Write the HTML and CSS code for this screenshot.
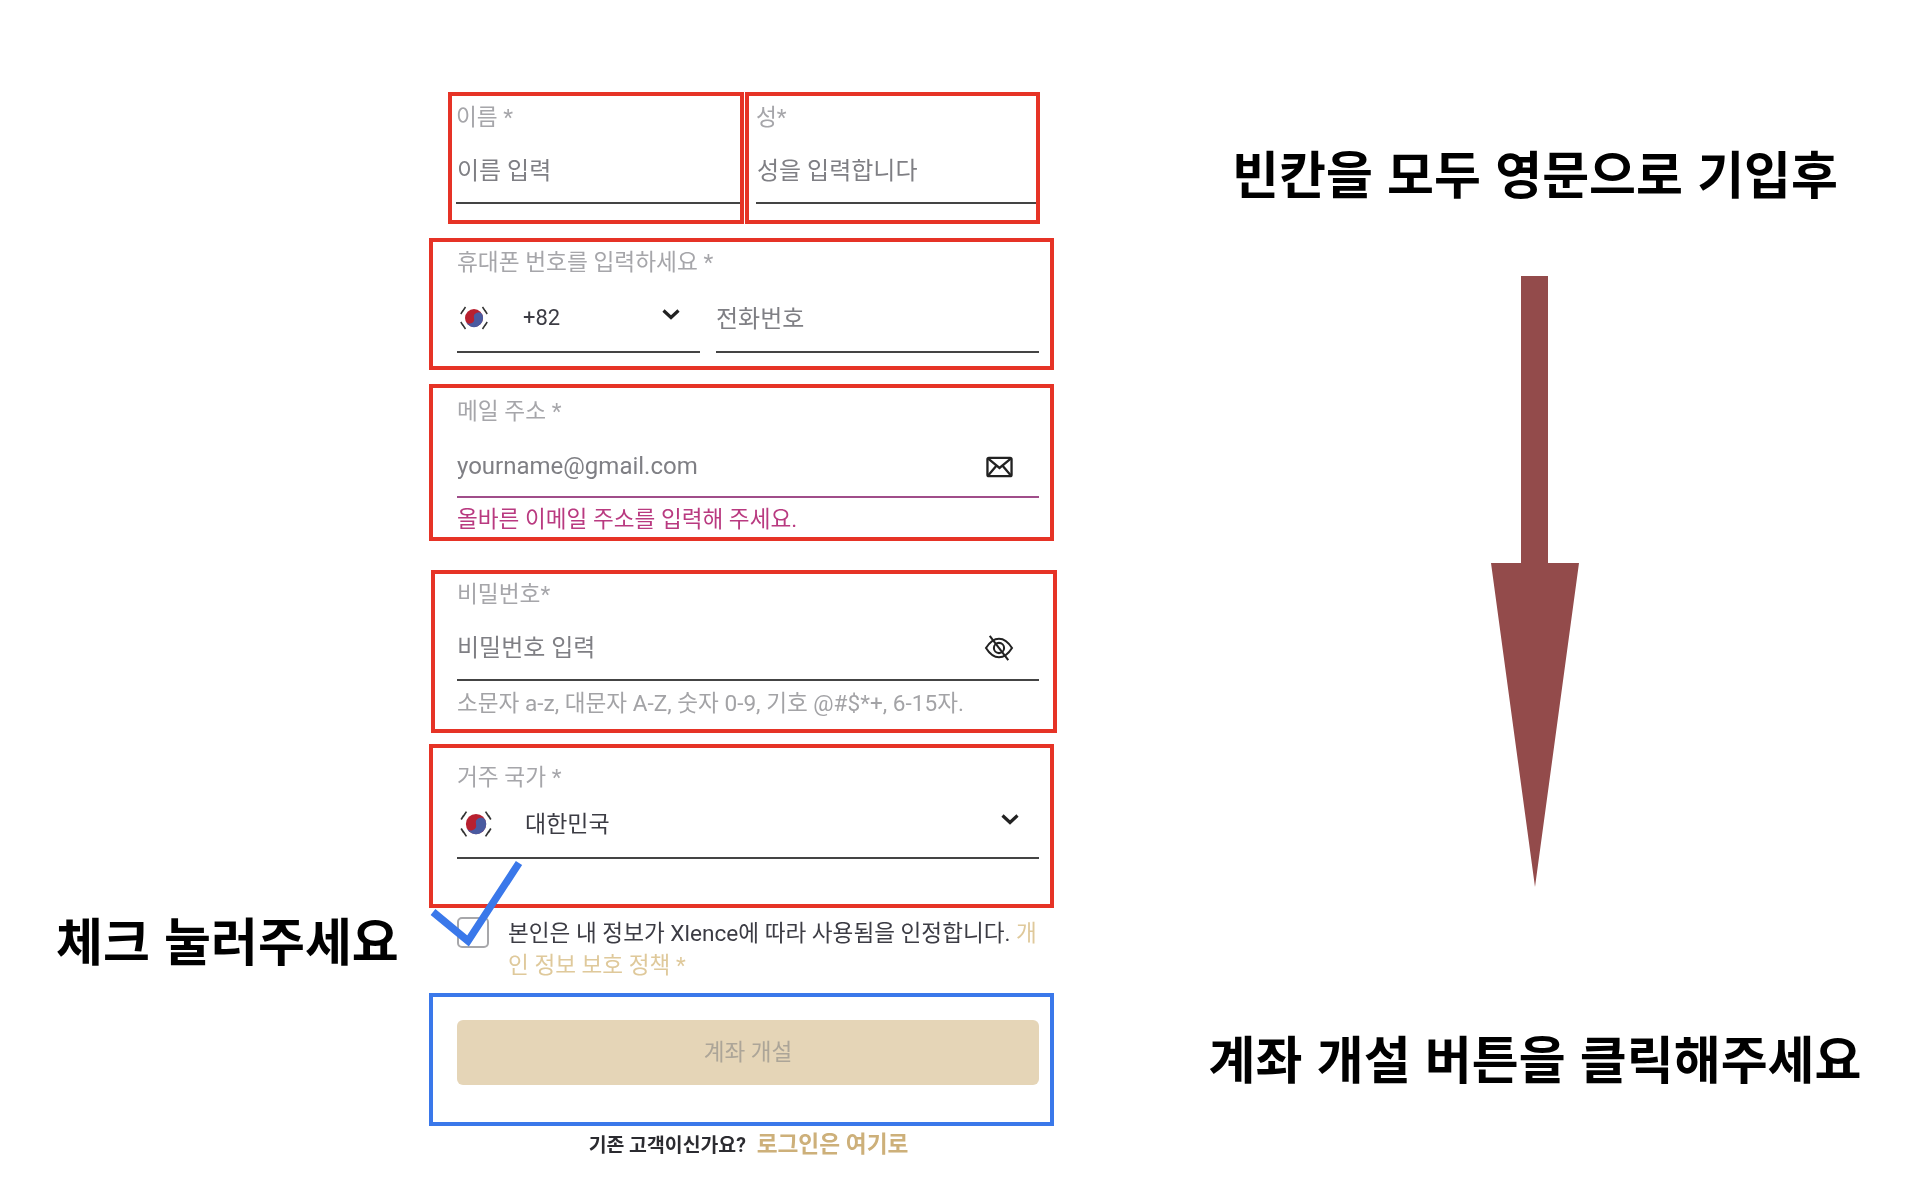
FILE: index.html
```html
<!DOCTYPE html>
<html lang="ko">
<head>
<meta charset="utf-8">
<title>계좌 개설</title>
<link rel="stylesheet" href="styles.css">
</head>
<body>
<main class="page">
  <aside class="left-note"><p class="note">체크 눌러주세요</p></aside>

  <form class="form">
    <div class="name-row">
      <section class="box box-name">
        <div class="label">이름 *</div>
        <div class="line"><span class="ph">이름 입력</span></div>
      </section>
      <section class="box box-name">
        <div class="label">성*</div>
        <div class="line"><span class="ph">성을 입력합니다</span></div>
      </section>
    </div>

    <section class="box box-phone">
      <div class="label">휴대폰 번호를 입력하세요 *</div>
      <div class="phone-row">
        <div class="line code">
          <svg class="flag" viewBox="0 0 32 32"><use href="#kr"/></svg>
          <span class="val code-val">+82</span>
          <svg class="chev" viewBox="0 0 20 12"><path d="M2.5 2.5 10 9.5 17.5 2.5"/></svg>
        </div>
        <div class="line num"><span class="ph">전화번호</span></div>
      </div>
    </section>

    <section class="box box-mail">
      <div class="label">메일 주소 *</div>
      <div class="line line-err">
        <span class="ph">yourname@gmail.com</span>
        <svg class="ico mail" viewBox="0 0 28 22"><rect x="1.5" y="1.5" width="25" height="19" rx="1.5"/><path d="M2 2 14 12 26 2M2 20 11 9.5M26 20 17 9.5"/></svg>
      </div>
      <div class="err">올바른 이메일 주소를 입력해 주세요.</div>
    </section>

    <section class="box box-pass">
      <div class="label">비밀번호*</div>
      <div class="line">
        <span class="ph">비밀번호 입력</span>
        <svg class="ico eye" viewBox="0 0 32 28"><path d="M2 14C7 6 12 4 16 4s9 2 14 10c-5 8-10 10-14 10S7 22 2 14Z"/><circle cx="16" cy="14" r="5.5"/><path d="M6 1 26 27"/></svg>
      </div>
      <div class="hint">소문자 a-z, 대문자 A-Z, 숫자 0-9, 기호 @#$*+, 6-15자.</div>
    </section>

    <section class="box box-country">
      <div class="label">거주 국가 *</div>
      <div class="line country">
        <svg class="flag" viewBox="0 0 32 32"><use href="#kr"/></svg>
        <span class="val country-val">대한민국</span>
        <svg class="chev" viewBox="0 0 20 12"><path d="M2.5 2.5 10 9.5 17.5 2.5"/></svg>
      </div>
    </section>

    <div class="agree">
      <span class="checkbox"></span>
      <p class="agree-text">본인은 내 정보가 Xlence에 따라 사용됨을 인정합니다. <span class="gold">개인 정보 보호 정책 *</span></p>
    </div>

    <section class="box box-blue">
      <div class="submit">계좌 개설</div>
    </section>

    <p class="login"><b>기존 고객이신가요?</b> <span class="login-link">로그인은 여기로</span></p>

    <svg class="tick" viewBox="0 0 100 90"><path d="M5 52 40 81 91 3"/></svg>
  </form>

  <aside class="right">
    <p class="note">빈칸을 모두 영문으로 기입후</p>
    <svg class="arrow" viewBox="0 0 90 613"><path d="M31 2H58V289H89L45 613 1 289H31Z"/></svg>
    <p class="note note-btn">계좌 개설 버튼을 클릭해주세요</p>
  </aside>
</main>

<svg class="defs" aria-hidden="true">
  <symbol id="kr" viewBox="0 0 32 32">
    <circle cx="16" cy="16" r="9" fill="#b8202f"/>
    <path d="M7.6 19.5a4.6 4.6 0 0 0 8.4-3.5 4.6 4.6 0 0 1 8.4-3.5A9 9 0 0 1 7.6 19.5Z" fill="#4a5aa0"/>
    <path d="M4.5 9.5 7.5 5M2.8 12 5 8.5M27.5 9.5 24.5 5M29.2 12 27 8.5M4.5 22.5 7.5 27M2.8 20 5 23.5M27.5 22.5 24.5 27M29.2 20 27 23.5" fill="none" stroke="#333" stroke-width="1.5"/>
  </symbol>
</svg>
</body>
</html>
```
FILE: styles.css
```css
* { box-sizing: border-box; }
html, body { margin: 0; background: #fff; }
body {
  width: 1916px;
  height: 1190px;
  overflow: hidden;
  font-family: "Roboto", "Noto Sans CJK KR", sans-serif;
}
p { margin: 0; }
.defs { display: none; }

.page {
  display: grid;
  grid-template-columns: 429px 625px 1fr;
  height: 100%;
}

/* annotations */
.note {
  font-family: "Noto Sans CJK KR", sans-serif;
  font-weight: 700;
  font-size: 51px;
  line-height: 60px;
  color: #000;
  white-space: nowrap;
}
.left-note { padding: 909px 0 0 56px; }
.right {
  padding: 142px 31px 0 131px;
  display: flex;
  flex-direction: column;
  align-items: center;
}
.arrow { display: block; width: 90px; height: 613px; fill: #934b4b; margin-top: 72px; }
.note-btn { margin-top: 140px; }

/* form column */
.form {
  position: relative;
  padding-top: 92px;
  display: flex;
  flex-direction: column;
  color: #3c3c44;
}
.name-row { display: flex; gap: 1px; margin-left: 19px; margin-bottom: 14px; }
.box {
  border: 4px solid #e63326;
  padding: 0 11px 0 24px;
  display: flex;
  flex-direction: column;
}
.box-name { width: 296px; height: 132px; padding: 0 0 0 4px; }
.box-name + .box-name { width: 295px; padding-left: 7px; }
.box-phone { height: 132px; margin-bottom: 14px; }
.box-mail { height: 157px; margin-bottom: 29px; }
.box-pass { height: 163px; margin: 0 -3px 11px 2px; padding-left: 22px; padding-right: 14px; }
.box-country { height: 164px; margin-bottom: 8px; }
.box-blue { border-color: #3a78ea; height: 133px; padding-top: 23px; margin-top: 11px; }

.label {
  font-size: 22.7px;
  line-height: 30px;
  color: #a6a6aa;
  margin-top: 7px;
  filter: blur(.4px);
}
.line {
  display: flex;
  align-items: center;
  justify-content: space-between;
  height: 66px;
  border-bottom: 2px solid #444;
  margin-top: 5px;
}
.ph { font-size: 24px; line-height: 30px; color: #7f7f84; filter: blur(.4px); }
.val { font-size: 22px; line-height: 28px; color: #3c3c44; filter: blur(.3px); }

.box-name .ph { margin: 2px 0 0 1px; }

.box-phone .label { margin-top: 6px; }
.phone-row { display: flex; gap: 16px; margin-top: 7px; }
.phone-row .line { margin-top: 0; height: 68px; }
.phone-row .ph { margin-top: 2px; }
.code { width: 243px; justify-content: flex-start; }
.num { flex: 1; }
.flag { width: 32px; height: 32px; flex: none; margin-left: 1px; filter: blur(.4px); }
.code-val { margin-left: 33px; }
.chev {
  width: 20px; height: 12px; flex: none;
  fill: none; stroke: #222; stroke-width: 3.2;
  margin: 0 19px 8px auto;
}
.ico { fill: none; stroke: #222; stroke-width: 2.4; flex: none; filter: blur(.3px); }
.mail { width: 27px; height: 22px; margin: 0 26px 1px 0; }
.eye { stroke-width: 2.2; width: 32px; height: 26px; margin-right: 24px; }

.box-mail .label { margin-top: 9px; }
.box-mail .line { height: 60px; margin-top: 11px; }
.box-mail .ph { margin-bottom: 2px; }
.line-err { border-bottom-color: #a04e8a; }
.err { font-size: 22.6px; line-height: 30px; color: #b93a80; margin-top: 7px; filter: blur(.4px); }

.box-pass .label { margin-top: 6px; }
.box-pass .line { height: 64px; margin-top: 7px; }
.hint { font-size: 22.6px; line-height: 30px; color: #a3a3a6; margin-top: 8px; filter: blur(.4px); }

.box-country .label { line-height: 26px; margin-top: 17px; }
.box-country .line { height: 68px; margin-top: 0; }
.country .flag { width: 36px; height: 36px; }
.country-val { font-size: 23px; margin: 2px auto 0 31px; }
.country .chev { margin: 0 19px 10px 0; }

/* agreement */
.agree { display: flex; gap: 19px; padding-left: 28px; }
.checkbox {
  width: 32px; height: 31px; flex: none; margin-top: 1px;
  border: 2px solid #a7a7aa; border-radius: 5px;
}
.agree-text {
  width: 536px;
  padding-top: 2px;
  font-size: 22.6px;
  line-height: 32px;
  color: #3c3c44;
  filter: blur(.4px);
}
.gold { color: #dfc99b; }

.submit {
  height: 65px;
  padding-bottom: 4px;
  background: #e5d5b7;
  border-radius: 6px;
  color: #aca598;
  font-size: 22.6px;
  display: flex;
  align-items: center;
  justify-content: center;
  filter: blur(.3px);
}

.login {
  padding: 2px 0 0 14px;
  text-align: center;
  font-size: 19.4px;
  line-height: 34px;
  color: #2b2b30;
  filter: blur(.3px);
}
.login b { font-weight: 700; }
.login-link { color: #cdb07a; font-size: 22.7px; font-weight: 700; margin-left: 6px; }

.tick {
  position: absolute;
  left: -1px;
  top: 860px;
  width: 100px;
  height: 90px;
  overflow: visible;
  fill: none;
  stroke: #3a78ea;
  stroke-width: 7.5;
}
```
